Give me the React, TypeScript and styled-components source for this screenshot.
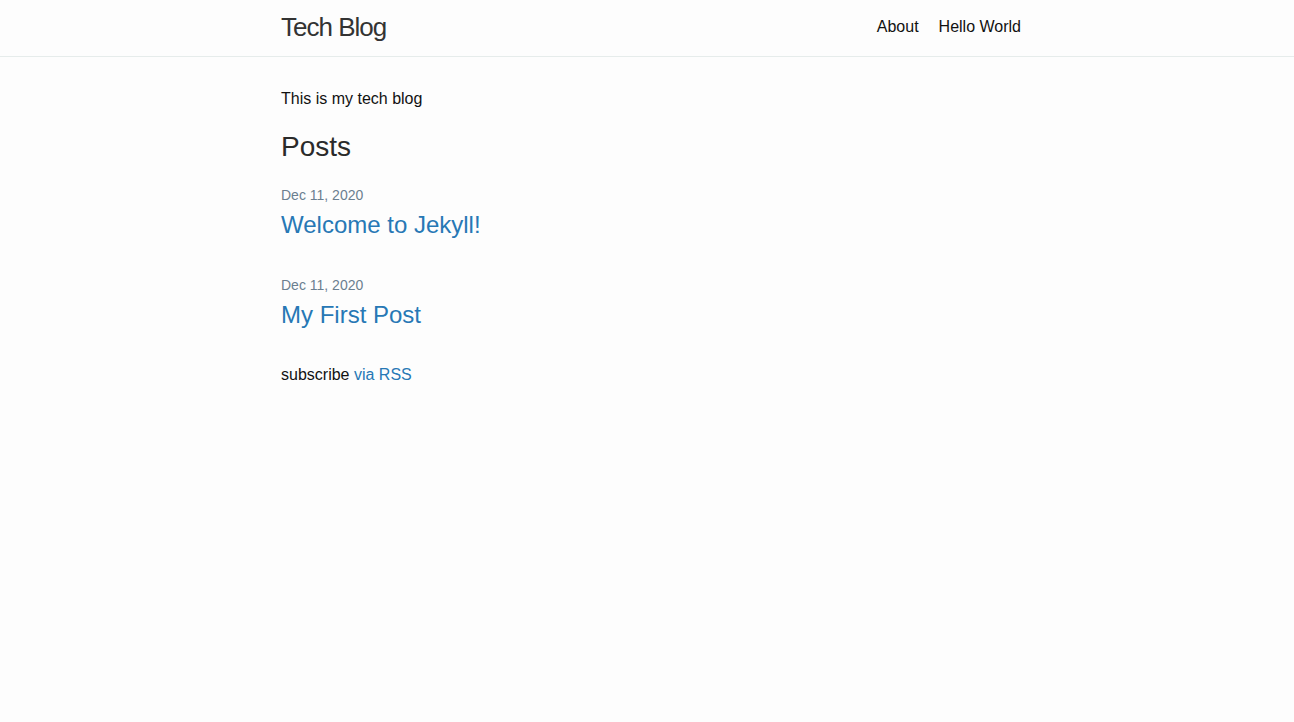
import React from "react";
import styled, { createGlobalStyle } from "styled-components";

const GlobalStyle = createGlobalStyle`
  html, body {
    margin: 0;
    padding: 0;
    background: #fdfdfd;
  }
  body {
    font-family: "Liberation Sans", Arial, Helvetica, sans-serif;
    font-size: 16px;
    line-height: 1.5;
    color: #111111;
  }
  * { box-sizing: border-box; }
`;

const Wrapper = styled.div`
  width: 740px;
  margin-left: calc(50% - 366px);
`;

const Header = styled.header`
  height: 57px;
  border-bottom: 1px solid #e6eceb;
`;

const HeaderInner = styled(Wrapper)`
  display: flex;
  align-items: center;
  justify-content: space-between;
  height: 56px;
`;

const SiteTitle = styled.a`
  font-size: 26px;
  font-weight: 300;
  letter-spacing: -1px;
  line-height: 56px;
  color: #333333;
  text-decoration: none;
  margin-bottom: 2px;
`;

const Nav = styled.nav`
  display: flex;
  gap: 20px;
  line-height: 54px;
  margin-bottom: 2px;
`;

const NavLink = styled.a`
  color: #111111;
  text-decoration: none;
  font-size: 16px;
`;

const Main = styled.main`
  padding: 30px 0;
`;

const Intro = styled.p`
  margin: 0 0 15px;
  line-height: 24px;
`;

const Heading = styled.h2`
  font-size: 28px;
  font-weight: 400;
  line-height: 42px;
  margin: 0 0 15px;
  color: #2a2a2a;
`;

const PostList = styled.ul`
  list-style: none;
  margin: 0;
  padding: 0;
  display: flex;
  flex-direction: column;
  gap: 30px;
`;

const PostItem = styled.li`
  display: flex;
  flex-direction: column;
`;

const PostMeta = styled.span`
  font-size: 14px;
  line-height: 24px;
  color: #6b7f90;
`;

const PostTitle = styled.h3`
  margin: 0;
  font-size: 24px;
  font-weight: 400;
  line-height: 36px;
`;

const PostLink = styled.a`
  color: #2778b5;
  text-decoration: none;
`;

const Subscribe = styled.p`
  margin: 30px 0 0;
  line-height: 24px;
`;

const RssLink = styled.a`
  color: #2778b5;
  text-decoration: none;
`;

const posts = [
  { date: "Dec 11, 2020", title: "Welcome to Jekyll!" },
  { date: "Dec 11, 2020", title: "My First Post" },
];

export default function App() {
  return (
    <>
      <GlobalStyle />
      <Header>
        <HeaderInner>
          <SiteTitle href="#">Tech Blog</SiteTitle>
          <Nav>
            <NavLink href="#">About</NavLink>
            <NavLink href="#">Hello World</NavLink>
          </Nav>
        </HeaderInner>
      </Header>
      <Main>
        <Wrapper>
          <Intro>This is my tech blog</Intro>
          <Heading>Posts</Heading>
          <PostList>
            {posts.map((p) => (
              <PostItem key={p.title}>
                <PostMeta>{p.date}</PostMeta>
                <PostTitle>
                  <PostLink href="#">{p.title}</PostLink>
                </PostTitle>
              </PostItem>
            ))}
          </PostList>
          <Subscribe>
            subscribe <RssLink href="#">via RSS</RssLink>
          </Subscribe>
        </Wrapper>
      </Main>
    </>
  );
}
